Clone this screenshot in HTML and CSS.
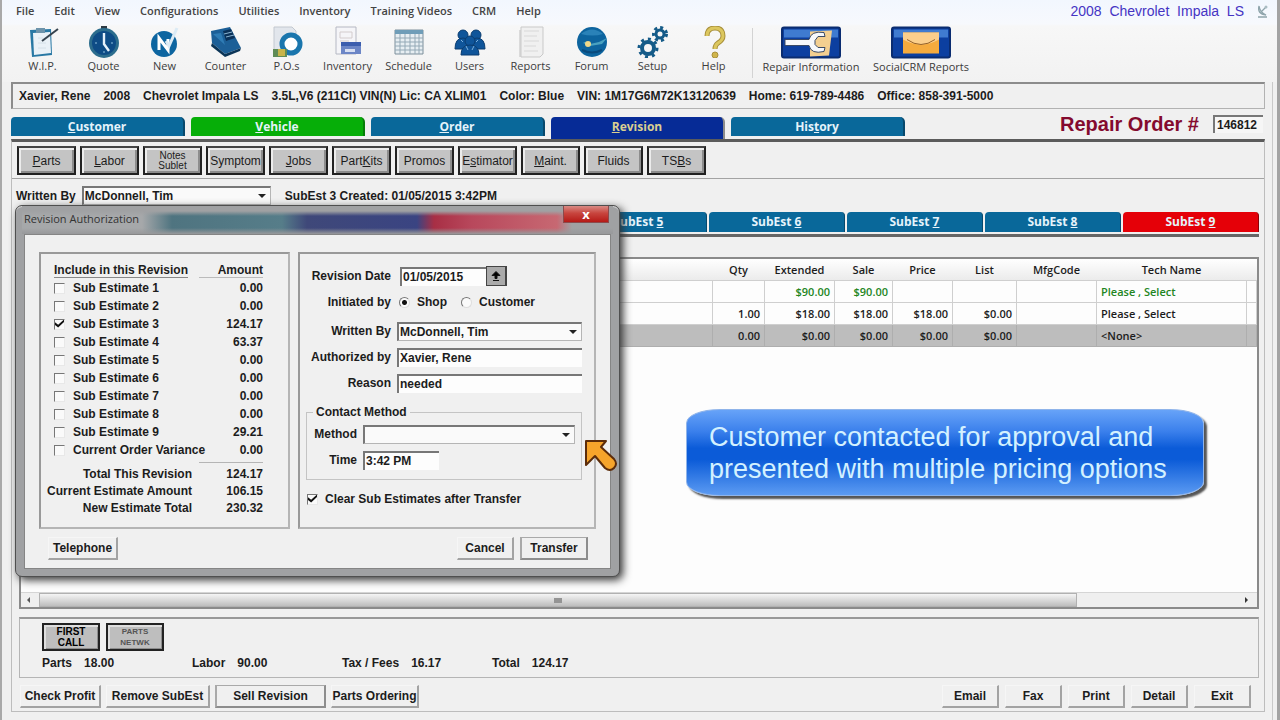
FILE: index.html
```html
<!doctype html>
<html lang="en">
<head>
    <meta charset="UTF-8">
    <meta name="viewport" content="width=device-width, initial-scale=1.0">
    <title>Repair Order 146812</title>
    <link rel="stylesheet" href="styles.css">
</head>
<body>
<div class="app">
    <header class="top">
        <div class="menubar">
            <nav class="menu">
                <a href="#">File</a>
                <a href="#">Edit</a>
                <a href="#">View</a>
                <a href="#">Configurations</a>
                <a href="#">Utilities</a>
                <a href="#">Inventory</a>
                <a href="#">Training Videos</a>
                <a href="#">CRM</a>
                <a href="#">Help</a>
            </nav>
            <span class="car">2008  Chevrolet  Impala  LS</span>
            <svg class="dish" viewBox="0 0 14 16"><path d="M3 3q-2 8 7 9q-6-3-7-9zM6 8l4-4M2 14h9" fill="#c4d2d6" stroke="#8ea4ab" stroke-width="1.3"/><circle cx="10" cy="4" r="1.5" fill="#a9bcc2"/></svg>
        </div>
        <div class="toolbar">
            <a class="tool" href="#">
                <svg viewBox="0 0 32 32"><path d="M3 4l21-1 1 26-20 2z" fill="#2878a4"/><path d="M6 7l17-1 1 21-17 2z" fill="#e9f1f7"/><path d="M9 2h9v5H9z" fill="#6d93aa"/><path d="M15 15L31 3" stroke="#35424d" stroke-width="2"/><path d="M11 12h5M11 17h8M11 22h8" stroke="#d4e0e8"/></svg>
                W.I.P.
            </a>
            <a class="tool" href="#">
                <svg viewBox="0 0 32 32"><path d="M13 0h6v4h-6z" fill="#2c3a44"/><circle cx="16" cy="17" r="15" fill="#2c6d8d"/><circle cx="16" cy="17" r="12" fill="#0e4c86"/><path d="M16 7v11l5 7" fill="none" stroke="#e5f1fa" stroke-width="2.4"/><path d="M7 17h2M23 17h2M16 27v-2" stroke="#8fc0de"/></svg>
                Quote
            </a>
            <a class="tool" href="#">
                <svg viewBox="0 0 32 32"><circle cx="15" cy="18" r="13" fill="#0d65a0"/><path d="M10 24V12l9 12V13" fill="none" stroke="#fff" stroke-width="3"/><path d="M17 15l3 5L28 2" fill="none" stroke="#dcebf5" stroke-width="3"/></svg>
                New
            </a>
            <a class="tool" href="#">
                <svg viewBox="0 0 32 32"><path d="M1 5l19-4 11 21-16 6L2 17z" fill="#1c5f97"/><path d="M2 17l13 11 16-6-1 3-15 6L1 20z" fill="#0b3557"/><path d="M13 5l8-2 4 9-9 3z" fill="#0a3158"/><path d="M14 8l8-2M16 11l8-2" stroke="#8ab4d2"/><path d="M3 8l8-1 4 12z" fill="#2f7cb5"/></svg>
                Counter
            </a>
            <a class="tool" href="#">
                <svg viewBox="0 0 32 32"><path d="M3 1h18l4 4v19H3z" fill="#e2e6ec" stroke="#c2c8d0"/><circle cx="20" cy="18" r="9" fill="#fff" stroke="#1a76ad" stroke-width="5"/><path d="M2 23h14v8H2z" fill="#5f8c56"/><path d="M7 23h7v7H7z" fill="#c7b44a"/></svg>
                P.O.s
            </a>
            <a class="tool" href="#">
                <svg viewBox="0 0 32 32"><path d="M4 1h20v27H4z" fill="#f5f5f8" stroke="#b5b8c3"/><path d="M8 6h12v6H8zM8 15h9" fill="none" stroke="#d3cccd"/><path d="M9 16h20v12H9z" fill="#6c86c6"/><path d="M9 16h20v4H9z" fill="#3c5eae"/><path d="M13 23h10v3H13z" fill="#d7dff2"/></svg>
                Inventory
            </a>
            <a class="tool" href="#">
                <svg viewBox="0 0 32 32"><path d="M2 4h28v24H2z" fill="#e7eef2" stroke="#7d8f9b"/><path d="M2 4h28v4H2z" fill="#6f9db8"/><path d="M2 12h28M2 16h28M2 20h28M2 24h28M7 8v20M12 8v20M17 8v20M22 8v20M26 8v20" stroke="#94a9b6"/></svg>
                Schedule
            </a>
            <a class="tool" href="#">
                <svg viewBox="0 0 32 32"><g fill="#0f559a" stroke="#0b3d70"><circle cx="9" cy="9" r="5"/><circle cx="22" cy="9" r="5"/><path d="M1 23q0-11 8-11t8 11z"/><path d="M15 23q0-11 8-11t8 11z"/><circle cx="16" cy="15" r="5"/><path d="M7 29q0-10 9-10t9 10z"/></g><path d="M12 20l2 4M20 20l-2 4M7 14l2 2M24 14l-2 2" stroke="#7db1dd"/></svg>
                Users
            </a>
            <a class="tool" href="#">
                <svg viewBox="0 0 32 32"><path d="M4 4h20v27H4z" fill="#dadada"/><path d="M6 1h22v27l-3 3H6z" fill="#f0f0f0" stroke="#c9c9c9"/><path d="M9 5h15M9 10h13M9 15h15M9 20h12M9 25h14" stroke="#e4e4e4" stroke-width="2"/></svg>
                Reports
            </a>
            <a class="tool" href="#">
                <svg viewBox="0 0 32 32"><circle cx="16" cy="16" r="15" fill="#0d649e"/><path d="M5 8q11-9 22 0q-10 3-22 0z" fill="#2a82b8"/><path d="M7 17q4-3 7 1l9-2 8-4-5 6-12 2z" fill="#49a1c0"/><circle cx="12" cy="18" r="3" fill="#efd889"/><path d="M6 24q10 5 20 0" fill="none" stroke="#0a4a7c" stroke-width="2"/></svg>
                Forum
            </a>
            <a class="tool" href="#">
                <svg viewBox="0 0 32 32"><g fill="none" stroke="#155b88"><circle cx="11" cy="22" r="6" stroke-width="4"/><circle cx="11" cy="22" r="9" stroke-width="3" stroke-dasharray="3 4"/><circle cx="23" cy="8" r="4" stroke-width="3"/><circle cx="23" cy="8" r="6.500" stroke-width="3" stroke-dasharray="3 3"/></g></svg>
                Setup
            </a>
            <a class="tool" href="#">
                <svg viewBox="0 0 32 32"><path d="M9 10q0-8 8-8t8 8q0 4-5 7-3 2-3 6" fill="none" stroke="#a8903b" stroke-width="5"/><path d="M9 10q0-8 8-8t8 8q0 4-5 7-3 2-3 6" fill="none" stroke="#dcc75f" stroke-width="3"/><circle cx="17" cy="29" r="3" fill="#d0b54b" stroke="#a8903b"/></svg>
                Help
            </a>
            <span class="divider"></span>
            <a class="tool wide" href="#">
                <svg viewBox="0 0 60 32"><rect x="1" y="1" width="58" height="30" rx="2" fill="#0c3fa0" stroke="#0a2c70" stroke-width="2"/><path d="M3 3h54v8H3z" fill="#3f7bd0"/><path d="M29 5l22-1-3 25-19 1z" fill="#f3cf90"/><path d="M4 13h24q2-9 15-7l1 4h-7l-3 4v4l3 3h7l-1 4q-13 3-15-6H4z" fill="#f6f8fb" stroke="#3a4a66"/></svg>
                Repair Information
            </a>
            <a class="tool wide" href="#">
                <svg viewBox="0 0 60 32"><rect x="1" y="1" width="58" height="30" rx="2" fill="#0c3fa0" stroke="#0a2c70" stroke-width="2"/><path d="M3 3h54v8H3z" fill="#3f7bd0"/><path d="M12 6h36v21H12z" fill="#f5ab3e"/><path d="M12 6h36v7q-9 5-18 5t-18-5z" fill="#fbcf8c"/><path d="M16 13q14 10 28 0" fill="none" stroke="#96632a"/></svg>
                SocialCRM Reports
            </a>
        </div>
    </header>

    <main class="work">
        <div class="infobar">
            <span>Xavier, Rene</span>
            <span>2008</span>
            <span>Chevrolet Impala LS</span>
            <span>3.5L,V6 (211CI) VIN(N) Lic: CA XLIM01</span>
            <span>Color: Blue</span>
            <span>VIN: 1M17G6M72K13120639</span>
            <span>Home: 619-789-4486</span>
            <span>Office: 858-391-5000</span>
        </div>

        <div class="tabrow">
            <nav class="tabs">
                <a href="#"><u>C</u>ustomer</a>
                <a href="#" class="green"><u>V</u>ehicle</a>
                <a href="#"><u>O</u>rder</a>
                <a href="#" class="current"><u>R</u>evision</a>
                <a href="#">His<u>t</u>ory</a>
            </nav>
            <label class="ro-label" for="ro">Repair Order #</label>
            <input class="ro-number" id="ro" value="146812">
        </div>

        <section class="sheet">
            <div class="actions">
                <button><u>P</u>arts</button>
                <button><u>L</u>abor</button>
                <button class="two-line">Notes<br>Sublet</button>
                <button>Symptom</button>
                <button><u>J</u>obs</button>
                <button>Part<u>K</u>its</button>
                <button>Promos</button>
                <button>E<u>s</u>timator</button>
                <button><u>M</u>aint.</button>
                <button>Fluids</button>
                <button>TS<u>B</u>s</button>
            </div>

            <div class="written">
                <label for="writer">Written By</label>
                <span class="drop"><select id="writer"><option>McDonnell, Tim</option></select></span>
                <span class="created">SubEst 3 Created: 01/05/2015 3:42PM</span>
            </div>

            <nav class="subtabs">
                <a href="#" aria-label="SubEst 1"></a>
                <a href="#" aria-label="SubEst 2"></a>
                <a href="#" class="navy" aria-label="SubEst 3"></a>
                <a href="#" class="red" aria-label="SubEst 4"></a>
                <a href="#">SubEst <u>5</u></a>
                <a href="#">SubEst <u>6</u></a>
                <a href="#">SubEst <u>7</u></a>
                <a href="#">SubEst <u>8</u></a>
                <a href="#" class="red">SubEst <u>9</u></a>
            </nav>

            <div class="grid-box">
                <table>
                    <colgroup>
                        <col>
                        <col class="c-qty">
                        <col class="c-ext">
                        <col class="c-sale">
                        <col class="c-price">
                        <col class="c-list">
                        <col class="c-mfg">
                        <col class="c-tech">
                        <col class="c-end">
                    </colgroup>
                    <thead>
                        <tr><th></th><th>Qty</th><th>Extended</th><th>Sale</th><th>Price</th><th>List</th><th>MfgCode</th><th>Tech Name</th><th></th></tr>
                    </thead>
                    <tbody>
                        <tr class="labor"><td></td><td></td><td>$90.00</td><td>$90.00</td><td></td><td></td><td></td><td class="left">Please , Select</td><td></td></tr>
                        <tr><td></td><td>1.00</td><td>$18.00</td><td>$18.00</td><td>$18.00</td><td>$0.00</td><td></td><td class="left">Please , Select</td><td></td></tr>
                        <tr class="blank"><td></td><td>0.00</td><td>$0.00</td><td>$0.00</td><td>$0.00</td><td>$0.00</td><td></td><td class="left">&lt;None&gt;</td><td></td></tr>
                    </tbody>
                </table>
                <div class="scrollbar">
                    <span class="arrow prev"></span>
                    <span class="thumb"><i></i></span>
                    <span class="arrow next"></span>
                </div>
            </div>

            <div class="summary">
                <div class="vendors">
                    <button class="first">FIRST<br>CALL</button>
                    <button class="parts-net">PARTS<br>NETWK</button>
                </div>
                <dl class="totals">
                    <div><dt>Parts</dt><dd>18.00</dd></div>
                    <div><dt>Labor</dt><dd>90.00</dd></div>
                    <div><dt>Tax / Fees</dt><dd>16.17</dd></div>
                    <div><dt>Total</dt><dd>124.17</dd></div>
                </dl>
            </div>

            <footer class="footer">
                <button class="flat w81">Check Profit</button>
                <button class="flat w104">Remove SubEst</button>
                <button class="flat default w111">Sell Revision</button>
                <button class="flat w88">Parts Ordering</button>
                <span class="push"></span>
                <div class="output">
                    <button class="flat w56">Email</button>
                    <button class="flat w56">Fax</button>
                    <button class="flat w56">Print</button>
                    <button class="flat w56">Detail</button>
                    <button class="flat w56">Exit</button>
                </div>
            </footer>
        </section>
    </main>

    <div class="callout">Customer contacted for approval and<br>presented with multiple pricing options</div>

    <form class="dialog">
        <div class="titlebar">
            <span>Revision Authorization</span>
            <button type="button" class="close" aria-label="Close">x</button>
        </div>
        <div class="dialog-body">
            <div class="panels">
                <section class="panel include">
                    <div class="line head"><span class="under">Include in this Revision</span><b>Amount</b></div>
                    <div class="line"><label><input type="checkbox">Sub Estimate 1</label><span>0.00</span></div>
                    <div class="line"><label><input type="checkbox">Sub Estimate 2</label><span>0.00</span></div>
                    <div class="line"><label><input type="checkbox" checked>Sub Estimate 3</label><span>124.17</span></div>
                    <div class="line"><label><input type="checkbox">Sub Estimate 4</label><span>63.37</span></div>
                    <div class="line"><label><input type="checkbox">Sub Estimate 5</label><span>0.00</span></div>
                    <div class="line"><label><input type="checkbox">Sub Estimate 6</label><span>0.00</span></div>
                    <div class="line"><label><input type="checkbox">Sub Estimate 7</label><span>0.00</span></div>
                    <div class="line"><label><input type="checkbox">Sub Estimate 8</label><span>0.00</span></div>
                    <div class="line"><label><input type="checkbox">Sub Estimate 9</label><span>29.21</span></div>
                    <div class="line"><label><input type="checkbox">Current Order Variance</label><span>0.00</span></div>
                    <div class="rule"></div>
                    <div class="sum"><span>Total This Revision</span><span>124.17</span></div>
                    <div class="sum"><span>Current Estimate Amount</span><span>106.15</span></div>
                    <div class="sum"><span>New Estimate Total</span><span>230.32</span></div>
                </section>

                <section class="panel details">
                    <div class="field">
                        <label for="rev-date">Revision Date</label>
                        <input class="sunk date" id="rev-date" value="01/05/2015">
                        <button type="button" class="pick" aria-label="Pick date"><svg viewBox="0 0 10 12"><path d="M5 1l4 4H6v3H4V5H1zM2 10h6" stroke="#111"/></svg></button>
                    </div>
                    <div class="field initiated">
                        <span class="name">Initiated by</span>
                        <label class="radio"><input type="radio" name="by" checked>Shop</label>
                        <label class="radio"><input type="radio" name="by">Customer</label>
                    </div>
                    <div class="field">
                        <label for="by-whom">Written By</label>
                        <span class="drop"><select id="by-whom"><option>McDonnell, Tim</option></select></span>
                    </div>
                    <div class="field">
                        <label for="auth">Authorized by</label>
                        <input class="sunk" id="auth" value="Xavier, Rene">
                    </div>
                    <div class="field">
                        <label for="reason">Reason</label>
                        <input class="sunk" id="reason" value="needed" autofocus>
                    </div>
                    <fieldset>
                        <legend>Contact Method</legend>
                        <div class="field">
                            <label for="method">Method</label>
                            <span class="drop"><select id="method"><option></option></select></span>
                        </div>
                        <div class="field">
                            <label for="time">Time</label>
                            <input class="sunk time" id="time" value="3:42 PM">
                        </div>
                    </fieldset>
                    <label class="clear"><input type="checkbox" checked>Clear Sub Estimates after Transfer</label>
                </section>
            </div>
            <div class="dialog-buttons">
                <button type="button" class="flat w70">Telephone</button>
                <span class="push"></span>
                <button type="button" class="flat w56">Cancel</button>
                <button type="button" class="flat default w68">Transfer</button>
            </div>
        </div>
    </form>

    <svg class="pointer" viewBox="0 0 34 34"><path d="M2 2h20l-5 6 13 12q4 5 0 9t-9 0L11 17l-9 9z" fill="#f6a42b" stroke="#5c2c0a" stroke-width="2" stroke-linejoin="round"/></svg>
</div>
</body>
</html>
```
FILE: styles.css
```css
* {
    margin: 0;
    padding: 0;
    box-sizing: border-box;
}
body {
    font-family: "Liberation Sans", Arial, sans-serif;
    font-size: 12px;
    font-weight: bold;
    line-height: 16px;
    color: #1c1c1c;
    background: #f0f0f0;
}
a {
    color: inherit;
    text-decoration: none;
}
button, input, select {
    font: inherit;
    color: inherit;
    border-radius: 0;
}
input:focus {
    outline: none;
}
svg {
    display: block;
}
.app {
    position: relative;
    display: flex;
    flex-direction: column;
    min-height: 100vh;
    border-left: 2px solid #a9a9a9;
    border-right: 3px solid #a3a3a3;
}

/* menu and toolbar */
.top {
    background: linear-gradient(#f2f7fe, #f7f9fd 24px, #f7f7f7 26px, #f2f2f2);
    font-family: "Open Sans", "Noto Sans", sans-serif;
}
.menubar {
    display: flex;
    align-items: center;
    height: 22px;
    padding: 0 7px 0 14px;
}
.menu {
    display: flex;
    flex: 1;
    gap: 20px;
    font-size: 11px;
    font-weight: 700;
    color: #444;
}
.menu {
    font-weight: 600;
}
.car {
    white-space: pre;
    font: 14px "Liberation Sans", Arial, sans-serif;
    color: #4534c4;
}
.dish {
    width: 14px;
    height: 16px;
    margin-left: 12px;
}
.toolbar {
    display: flex;
    height: 60px;
    padding: 4px 0 0 10px;
}
.tool {
    display: flex;
    flex-direction: column;
    align-items: center;
    width: 61px;
    font-size: 11px;
    font-weight: normal;
    line-height: 15px;
    color: #3c3c3c;
    white-space: nowrap;
}
.tool svg {
    width: 32px;
    height: 32px;
}
.tool.wide {
    width: 110px;
}
.tool.wide svg {
    width: 60px;
    height: 33px;
}
.divider {
    width: 1px;
    margin: 2px 3px 4px 8px;
    background: #d3d3d3;
}

/* work area */
.work {
    display: flex;
    flex-direction: column;
    flex: 1;
    padding: 0 7px 8px 9px;
    border-right: 1px solid #c9c9c9;
    margin-right: 4px;
}
.infobar {
    display: flex;
    align-items: center;
    gap: 13px;
    height: 27px;
    padding: 0 6px;
    border: 1px solid #b2b2b2;
    border-top: 2px solid #8c8c8c;
    border-left: 2px solid #8c8c8c;
    white-space: nowrap;
}
.tabrow {
    display: flex;
    align-items: center;
    height: 30px;
    padding-right: 2px;
}
.tabs {
    display: flex;
    gap: 6px;
    flex: 1;
    align-self: flex-end;
    height: 22px;
    font-family: "Open Sans", "Noto Sans", sans-serif;
}
.tabs a {
    width: 174px;
    height: 19px;
    border-radius: 4px 5px 0 0;
    background: #09689a;
    border-right: 2px solid #07486c;
    color: #e5f3fa;
    line-height: 19px;
    text-align: center;
}
.tabs .green {
    background: #06ae08;
    border-color: #067e08;
}
.tabs .current {
    height: 22px;
    background: #062b96;
    border-right: 2px solid #8b8b8b;
    color: #d9cf91;
}
.ro-label {
    font-size: 20px;
    color: #840a2e;
    margin-right: 14px;
}
.ro-number {
    width: 50px;
    height: 18px;
    padding-left: 2px;
    border: 0;
    border-top: 2px solid #777;
    border-left: 2px solid #777;
    background: #f6f6f6;
}
.sheet {
    display: flex;
    flex-direction: column;
    flex: 1;
    padding: 0 5px 3px 7px;
    border: 1px solid #bdbdbd;
    border-top: 3px solid #5b5b5b;
}
.actions {
    display: flex;
    gap: 4px;
    padding: 4px 0 3px 5px;
    margin: 0 -5px 0 -7px;
    border-bottom: 1px solid #a3a3a3;
}
.actions button {
    width: 59px;
    height: 29px;
    border: 2px solid #222;
    border-top-color: #444;
    background: #c4c4c4;
    box-shadow: inset 2px 2px #ececec, inset -2px -2px #8d8d8d;
    font-weight: normal;
    line-height: 24px;
    white-space: nowrap;
    overflow: hidden;
}
.actions .two-line {
    font-size: 10px;
    line-height: 10px;
}
.written {
    display: flex;
    align-items: center;
    height: 33px;
    margin-left: -3px;
}
.written .drop {
    width: 189px;
    margin: 0 14px 0 6px;
}
.drop {
    position: relative;
    display: inline-flex;
}
.drop select {
    appearance: none;
    width: 100%;
    height: 19px;
    padding: 0 1px;
    border: 1px solid #b5b5b5;
    border-top: 2px solid #777;
    border-left: 2px solid #777;
    background: #fafafa;
}
.drop::after {
    content: "";
    position: absolute;
    right: 5px;
    top: 8px;
    border: 4px solid transparent;
    border-top-color: #222;
    border-bottom: 0;
}
.subtabs {
    display: grid;
    grid-template-columns: repeat(9, 1fr);
    gap: 2px;
    border-bottom: 3px solid #666;
    padding-bottom: 2px;
    font-family: "Open Sans", "Noto Sans", sans-serif;
}
.subtabs a {
    height: 20px;
    border-radius: 4px 4px 0 0;
    border-right: 1px solid #07486c;
    background: #09689a;
    color: #e5f3fa;
    line-height: 20px;
    text-align: center;
}
.subtabs .red {
    background: #e50008;
    border-color: #8c0006;
}
.subtabs .navy {
    background: #062b96;
}

/* line items */
.grid-box {
    display: flex;
    flex-direction: column;
    flex: 1;
    margin-top: 20px;
    border: 2px solid #8a8a8a;
    background: #fdfdfd;
}
table {
    width: 100%;
    table-layout: fixed;
    border-collapse: collapse;
    font: 600 11px "Open Sans", "Noto Sans", sans-serif;
}
.c-qty { width: 52px; }
.c-ext { width: 70px; }
.c-sale { width: 58px; }
.c-price { width: 60px; }
.c-list { width: 64px; }
.c-mfg { width: 80px; }
.c-tech { width: 150px; }
.c-end { width: 10px; }
th {
    height: 21px;
    font-weight: 600;
    background: linear-gradient(#fff, #ebebeb);
}
td {
    height: 22px;
    padding: 0 4px;
    border: 1px solid #cfcfcf;
    border-left-width: 0;
    text-align: right;
}
td.left {
    text-align: left;
}
.labor {
    color: #23861f;
}
.blank {
    background: #bdbdbd;
}
.blank td {
    border-color: #aeaeae;
}
.scrollbar {
    display: flex;
    align-items: center;
    height: 15px;
    margin-top: auto;
    background: #efefef;
    border-top: 1px solid #d5d5d5;
}
.arrow {
    width: 18px;
}
.arrow::before {
    content: "";
    display: block;
    width: 0;
    margin-left: 6px;
    border: 3px solid transparent;
}
.prev::before {
    border-right-color: #555;
    border-left: 0;
}
.next {
    margin-left: auto;
}
.next::before {
    border-left-color: #333;
    border-right: 0;
}
.thumb {
    display: flex;
    justify-content: center;
    align-items: center;
    width: 84%;
    height: 14px;
    border: 1px solid #b1b1b1;
    background: linear-gradient(#f5f5f5, #dadada 50%, #bdbdbd);
}
.thumb i {
    width: 8px;
    height: 5px;
    background: #949494;
}

/* totals */
.summary {
    margin-top: 8px;
    padding: 4px 22px 2px;
    border: 1px solid #b5b5b5;
    border-top: 2px solid #989898;
}
.vendors {
    display: flex;
    gap: 6px;
}
.vendors button {
    width: 58px;
    height: 28px;
    border: 2px solid #222;
    background: #bebebe;
    box-shadow: inset 2px 2px #dedede, inset -1px -1px #8d8d8d;
    line-height: 11px;
}
.vendors .first {
    font-size: 10px;
    color: #000;
}
.vendors .parts-net {
    font-size: 8px;
    color: #555;
}
.totals {
    display: flex;
    height: 24px;
    align-items: center;
}
.totals div {
    display: flex;
    gap: 12px;
    width: 150px;
}
.footer {
    display: flex;
    align-items: center;
    gap: 5px;
    padding: 7px 8px 0 1px;
}
.output {
    display: flex;
    gap: 6px;
}
.push {
    flex: 1;
}
.flat {
    height: 23px;
    border: 1px solid #f6f6f6;
    border-right: 2px solid #a3a3a3;
    border-bottom: 2px solid #a3a3a3;
    background: #f0f0f0;
    white-space: nowrap;
}
.default {
    border: 2px solid #8d8d8d;
    border-top: 1px solid #a9a9a9;
    border-left-color: #a9a9a9;
}
.w56 { width: 57px; }
.w68 { width: 68px; }
.w70 { width: 70px; }
.w81 { width: 81px; }
.w88 { width: 88px; }
.w104 { width: 104px; }
.w111 { width: 111px; }

/* caption bubble */
.callout {
    position: absolute;
    left: 684px;
    top: 409px;
    width: 518px;
    height: 87px;
    padding: 11px 22px;
    border: 1px solid #8fb4ea;
    border-radius: 34px / 14px;
    background: linear-gradient(#67a3f8, #3b80ec 25%, #0b5bd8 45%, #0b5bd8 58%, #5c9bf2);
    box-shadow: 3px 3px 2px #555;
    font-size: 27px;
    font-weight: normal;
    line-height: 32px;
    color: #d3f1ff;
    white-space: nowrap;
}

/* revision authorization window */
.dialog {
    position: absolute;
    left: 13px;
    top: 205px;
    width: 605px;
    padding: 0 8px 7px;
    border: 1px solid #4f4f4f;
    border-radius: 7px;
    background: #a0a1a3;
    box-shadow: inset 0 1px #ddd, 3px 3px 8px #333;
}
.titlebar {
    display: flex;
    align-items: center;
    justify-content: space-between;
    height: 28px;
    margin: 0 -2px;
    padding: 0 4px 0 2px;
    background: linear-gradient(#a0a1a3 5px, transparent 10px, transparent 22px, #98999b), linear-gradient(90deg, #a6a8aa 120px, #4f7480 150px, #567d89 260px, #3f4879 285px, #3a4482 395px, #a82f45 412px, #b8485c 450px, #c76872 535px, #a0a1a3 550px);
    font: 11px "Open Sans", "Noto Sans", sans-serif;
    color: #333;
}
.titlebar span {
    line-height: 24px;
    align-self: flex-start;
    padding-top: 1px;
}
.close {
    align-self: flex-start;
    width: 46px;
    height: 17px;
    border: 1px solid #8c4a4c;
    border-top: 0;
    background: linear-gradient(#d98a84, #c8453e 45%, #b51a17);
    color: #fff;
    font: bold 13px "Open Sans", sans-serif;
    line-height: 14px;
}
.dialog-body {
    padding: 17px 14px 8px;
    border: 1px solid #858585;
    background: #f0f0f0;
}
.panels {
    display: flex;
    gap: 8px;
}
.panel {
    height: 277px;
    border: 2px solid #b5b5b5;
    border-top-color: #999;
    border-left-color: #999;
}
.include {
    width: 251px;
    padding: 8px 25px 0 13px;
}
.line {
    display: flex;
    justify-content: space-between;
    height: 18px;
}
.line label {
    display: flex;
    align-items: center;
    align-self: flex-start;
    gap: 8px;
    white-space: nowrap;
}
.head b {
    width: 64px;
    height: 16px;
    text-align: right;
    border-bottom: 1px solid #bbb;
}
.under {
    height: 16px;
    border-bottom: 1px solid #888;
    white-space: nowrap;
}
.rule {
    width: 64px;
    margin: 2px 0 3px auto;
    border-top: 1px solid #b5b5b5;
}
.sum {
    display: flex;
    justify-content: flex-end;
    line-height: 17px;
    white-space: nowrap;
}
.sum span + span {
    width: 71px;
    text-align: right;
}
.sum span:first-child {
    flex: 1;
    direction: rtl;
    min-width: 0;
}
input[type=checkbox] {
    appearance: none;
    flex: none;
    width: 11px;
    height: 11px;
    border: 1px solid #e8e8e8;
    border-top-color: #777;
    border-left-color: #777;
    background: #fafafa;
}
input[type=checkbox]:checked::before {
    content: "";
    display: block;
    width: 9px;
    height: 8px;
    background: #111;
    clip-path: polygon(0 35%, 35% 65%, 100% 0, 100% 30%, 35% 100%, 0 70%);
}
.details {
    flex: 1;
    padding: 9px 12px 0 3px;
}
.field {
    display: flex;
    align-items: center;
    height: 26px;
}
.initiated {
    margin-bottom: 3px;
}
.field > label:first-child, .name {
    width: 88px;
    margin-right: 6px;
    text-align: right;
    white-space: nowrap;
}
.field .drop, .sunk {
    flex: 1;
    min-width: 0;
}
.sunk {
    height: 19px;
    padding: 0 1px;
    border: 0;
    border-top: 2px solid #777;
    border-left: 2px solid #777;
    background: #fdfdfd;
}
.date {
    flex: none;
    width: 86px;
    margin-left: 3px;
}
.pick {
    width: 21px;
    height: 20px;
    padding: 2px 4px;
    border: 1px solid #444;
    border-right-width: 2px;
    background: #aaa;
}
.pick svg {
    width: 10px;
    height: 13px;
}
.field .radio {
    display: flex;
    align-items: center;
    gap: 7px;
    margin-right: 12px;
}
input[type=radio] {
    appearance: none;
    flex: none;
    width: 11px;
    height: 11px;
    margin-left: 2px;
    border: 1px solid #ddd;
    border-top-color: #777;
    border-left-color: #777;
    border-radius: 50%;
    background: #fafafa;
}
input[type=radio]:checked {
    background: radial-gradient(#111 2px, #fafafa 3px);
}
fieldset {
    height: 76px;
    margin: 8px 0 0 3px;
    padding: 1px 6px 0 0;
    border: 1px solid #c4c4c4;
}
legend {
    margin-left: 6px;
    padding: 0 3px;
}
fieldset .field > label:first-child {
    width: 50px;
}
.time {
    flex: none;
    width: 76px;
}
.clear {
    display: flex;
    align-items: center;
    gap: 7px;
    margin: 11px 0 0 4px;
}
.dialog-buttons {
    display: flex;
    gap: 6px;
    padding: 8px 8px 0 9px;
}
.pointer {
    position: absolute;
    left: 582px;
    top: 439px;
    width: 34px;
    height: 34px;
}
```
